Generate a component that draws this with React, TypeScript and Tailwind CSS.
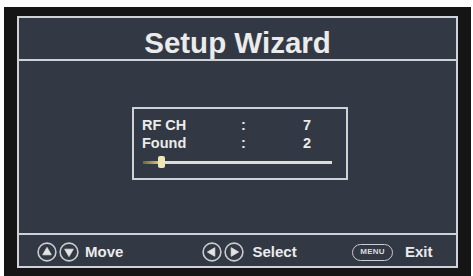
import React from "react";

const font = { fontFamily: '"Liberation Sans", Arial, sans-serif' };

function CircleArrow({ dir }: { dir: "up" | "down" | "left" | "right" }) {
  const paths: Record<string, string> = {
    up: "M10 5.4 L14.3 12.8 L5.7 12.8 Z",
    down: "M10 14.6 L14.3 7.2 L5.7 7.2 Z",
    left: "M5.4 10 L12.8 5.7 L12.8 14.3 Z",
    right: "M14.6 10 L7.2 5.7 L7.2 14.3 Z",
  };
  return (
    <svg width="20" height="20" viewBox="0 0 20 20" className="shrink-0">
      <circle cx="10" cy="10" r="8.9" fill="none" stroke="#c9ccd0" strokeWidth="1.6" />
      <path d={paths[dir]} fill="#e4e4e4" stroke="#e4e4e4" strokeWidth="0.8" strokeLinejoin="round" />
    </svg>
  );
}

export default function App() {
  return (
    <div className="w-[473px] h-[276px] bg-white pl-[4px] pt-[7px] pr-[2px] flex overflow-hidden" style={font}>
      <div className="flex-1 bg-[#151515] pl-[13px] pt-[9px] pr-[13px] pb-[8px] flex">
        <div className="flex-1 border-2 border-[#cfd2d6] bg-[#323944] flex flex-col text-[#ebebeb]">
          {/* header */}
          <div className="h-[41px] pt-[8px] text-center text-[29.5px] leading-[33px] font-bold">
            Setup Wizard
          </div>
          <div className="h-[2px] bg-[#cfd2d6]" />
          {/* body */}
          <div className="flex-1 pt-[46px] pl-[113px]">
            <div className="w-[216px] h-[73px] border-2 border-[#cfd2d6] pt-[7px] pl-[8px] flex flex-col">
              <div className="flex text-[14.5px] leading-[18px] font-bold">
                <span className="w-[99px]">RF CH</span>
                <span className="w-[62px]">:</span>
                <span>7</span>
              </div>
              <div className="flex text-[14.5px] leading-[18px] font-bold">
                <span className="w-[99px]">Found</span>
                <span className="w-[62px]">:</span>
                <span>2</span>
              </div>
              <div className="relative ml-[1px] mt-[3px] w-[189px] h-[14px] flex items-center">
                <div className="w-[16px] h-[3px] bg-gradient-to-r from-[#6d6a3c] to-[#d6c46a]" />
                <div className="flex-1 h-[3px] bg-[#dcdcdc]" />
                <div className="absolute left-[15px] top-[1px] w-[7px] h-[12px] rounded-[2px] bg-[#efe6b4]" />
              </div>
            </div>
          </div>
          <div className="h-[2px] bg-[#cfd2d6]" />
          {/* footer */}
          <div className="h-[31px] pt-[3px] pl-[18px] flex items-center text-[15px] font-bold">
            <div className="w-[165px] flex items-center">
              <CircleArrow dir="up" />
              <div className="w-[2px]" />
              <CircleArrow dir="down" />
              <span className="ml-[6px]">Move</span>
            </div>
            <div className="w-[150px] flex items-center">
              <CircleArrow dir="left" />
              <div className="w-[1.5px]" />
              <CircleArrow dir="right" />
              <span className="ml-[9px]">Select</span>
            </div>
            <div className="flex items-center">
              <div className="w-[41px] h-[17px] rounded-full border-[1.6px] border-[#c9ccd0] flex items-center justify-center text-[8px] leading-none font-bold text-[#dcdcdc] tracking-[0.2px]">
                MENU
              </div>
              <span className="ml-[12px]">Exit</span>
            </div>
          </div>
        </div>
      </div>
    </div>
  );
}
